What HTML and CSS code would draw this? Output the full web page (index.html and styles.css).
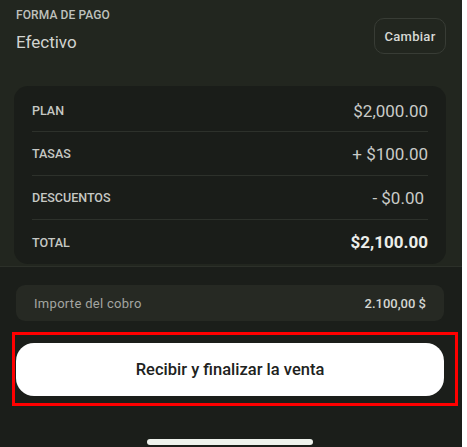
FILE: index.html
```html
<!DOCTYPE html>
<html lang="es">
<head>
    <meta charset="UTF-8">
    <meta name="viewport" content="width=device-width, initial-scale=1.0">
    <title>Forma de pago</title>
    <link rel="stylesheet" href="styles.css">
</head>
<body>
    <div class="screen">
        <section class="top">
            <div class="payment-head">
                <div class="payment-info">
                    <p class="payment-label">FORMA DE PAGO</p>
                    <p class="payment-method">Efectivo</p>
                </div>
                <button class="change-btn">Cambiar</button>
            </div>

            <div class="summary">
                <div class="row">
                    <span class="row-label">PLAN</span>
                    <span class="row-value">$2,000.00</span>
                </div>
                <div class="row">
                    <span class="row-label">TASAS</span>
                    <span class="row-value">+ $100.00</span>
                </div>
                <div class="row">
                    <span class="row-label">DESCUENTOS</span>
                    <span class="row-value discount">- $0.00</span>
                </div>
                <div class="row total">
                    <span class="row-label">TOTAL</span>
                    <span class="row-value">$2,100.00</span>
                </div>
            </div>
        </section>

        <section class="bottom">
            <div class="amount">
                <span class="amount-label">Importe del cobro</span>
                <span class="amount-value">2.100,00 $</span>
            </div>

            <div class="highlight">
                <button class="finish-btn">Recibir y finalizar la venta</button>
            </div>

            <div class="home-bar"></div>
        </section>
    </div>
</body>
</html>
```

FILE: styles.css
```css
body {
    margin: 0;
    background-color: #ffffff;
    font-family: Roboto, "Noto Sans", Arial, sans-serif;
}

p {
    margin: 0;
}

.screen {
    width: 462px;
    height: 447px;
    display: flex;
    flex-direction: column;
    background-color: #1b1e1a;
    overflow: hidden;
}

/* upper part: payment method + summary card */
.top {
    height: 266px;
    padding: 0 16px;
    background-color: #22261f;
    border-bottom: 1px solid #2c3029;
}

.payment-head {
    display: flex;
    justify-content: space-between;
    align-items: flex-start;
    height: 86px;
}

.payment-label {
    margin-top: 8px;
    font-size: 12px;
    font-weight: 500;
    color: #bfc1bd;
    letter-spacing: 0.1px;
}

.payment-method {
    margin-top: 10px;
    font-size: 17px;
    color: #d2d4d0;
}

.change-btn {
    margin-top: 18px;
    width: 72px;
    height: 36px;
    padding: 0;
    border: 1px solid #383c35;
    border-radius: 10px;
    background: transparent;
    color: #d6d8d4;
    font-family: inherit;
    font-size: 13px;
    font-weight: 500;
    letter-spacing: 0.3px;
}

.summary {
    margin-left: -2px;
    padding: 2px 18px 0;
    background-color: #1a1d19;
    border-radius: 14px;
}

.row {
    display: flex;
    justify-content: space-between;
    align-items: center;
    height: 44px;
    box-sizing: border-box;
    border-bottom: 1px solid #2d312b;
}

.row:first-child {
    padding-top: 2px;
}

.row.total {
    border-bottom: none;
}

.row-label {
    font-size: 12.5px;
    font-weight: 500;
    color: #c6c8c4;
}

.row-value {
    font-size: 17px;
    color: #c9cbc7;
}

.row-value.discount {
    margin-right: 4px;
}

.row.total .row-value {
    font-weight: 700;
    color: #eceeea;
}

/* lower part: amount + action */
.bottom {
    flex: 1;
    padding: 18px 0 0 12px;
    position: relative;
}

.amount {
    display: flex;
    justify-content: space-between;
    align-items: center;
    width: 428px;
    height: 36px;
    margin-left: 4px;
    padding: 0 18px;
    box-sizing: border-box;
    background-color: #262923;
    border-radius: 9px;
}

.amount-label {
    font-size: 13px;
    color: #a3a5a1;
    letter-spacing: 0.3px;
}

.amount-value {
    font-size: 13px;
    font-weight: 500;
    color: #d4d6d2;
}

.highlight {
    width: 434px;
    margin-top: 11px;
    padding: 8px 5px 7px 1px;
    border: 3px solid #ff0000;
}

.finish-btn {
    display: block;
    width: 428px;
    height: 53px;
    border: none;
    border-radius: 18px;
    background-color: #ffffff;
    color: #202220;
    font-family: inherit;
    font-size: 16.5px;
    font-weight: 500;
}

.home-bar {
    position: absolute;
    left: 147px;
    bottom: 2px;
    width: 166px;
    height: 6px;
    border-radius: 3px;
    background-color: #eef2ec;
}
```
